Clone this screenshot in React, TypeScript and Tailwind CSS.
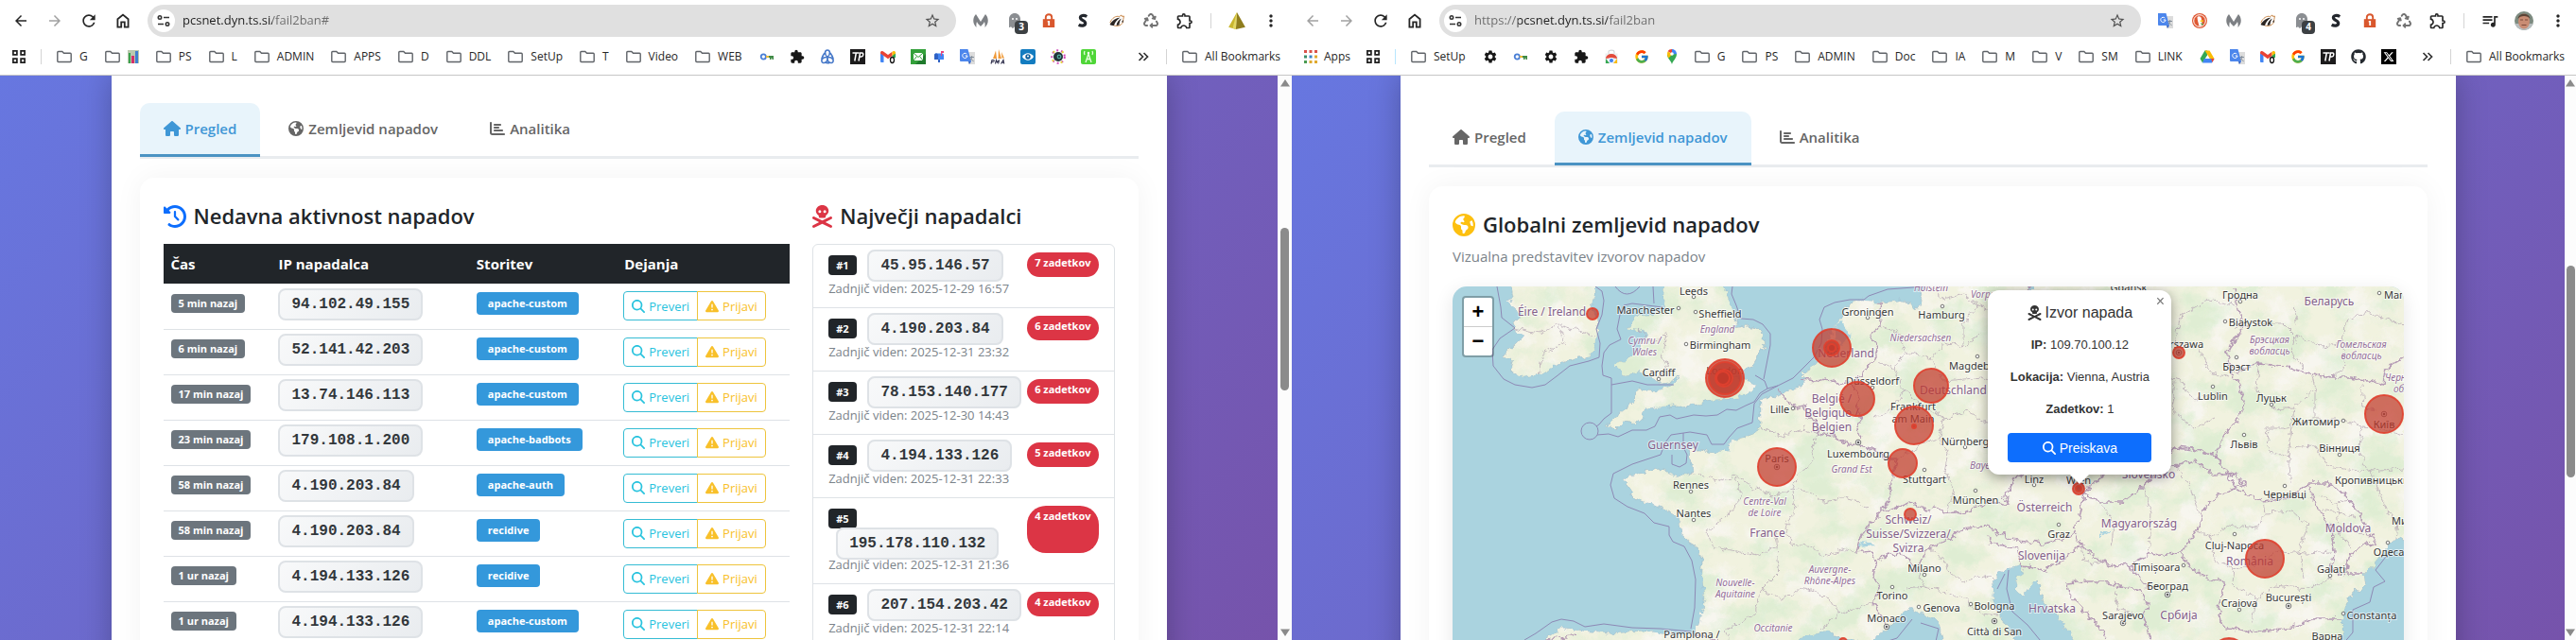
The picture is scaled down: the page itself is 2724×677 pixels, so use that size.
import type { ReactNode } from "react";
import {
  FaChartBar,
  FaClockRotateLeft,
  FaEarthAmericas,
  FaGhost,
  FaGithub,
  FaHouse,
  FaMagnifyingGlass,
  FaRecycle,
  FaSkullCrossbones,
  FaTriangleExclamation,
  FaXTwitter,
} from "react-icons/fa6";
import { FcGoogle } from "react-icons/fc";
import {
  MdArrowBack,
  MdArrowForward,
  MdExtension,
  MdMoreVert,
  MdOutlineExtension,
  MdQueueMusic,
  MdRefresh,
  MdSettings,
  MdStarBorder,
} from "react-icons/md";

/* ---------- browser icons ---------- */

const HomeIcon = () => (
  <svg viewBox="0 0 20 20" className="size-5" fill="none" stroke="currentColor" strokeWidth="1.8">
    <path d="M4.4 16.6V8.2L10 3.6l5.6 4.6v8.4h-3.8v-5.2H8.2v5.2z" />
  </svg>
);

const TuneIcon = () => (
  <svg viewBox="0 0 16 16" className="size-4" fill="none" stroke="#333" strokeWidth="1.6">
    <circle cx="4" cy="4.5" r="1.7" />
    <path d="M8 4.5h6M2 11.5h6" />
    <circle cx="12" cy="11.5" r="1.7" />
  </svg>
);

const FolderIcon = () => (
  <svg viewBox="0 0 16 16" className="size-4 shrink-0" fill="none" stroke="#5f6368" strokeWidth="1.4">
    <path d="M.8 3.4c0-.6.4-.9.9-.9h4.1l1.7 1.8h6.8c.5 0 .9.4.9.9v7.4c0 .5-.4.9-.9.9H1.700c-.5 0-.9-.4-.9-.9z" />
  </svg>
);

const GridIcon = () => (
  <svg viewBox="0 0 16 16" className="size-4" fill="none" stroke="#1f1f1f" strokeWidth="1.7">
    <path d="M1.9 1.9h4v4h-4zM10.1 1.9h4v4h-4zM1.9 10.1h4v4h-4zM10.1 10.1h4v4h-4z" />
  </svg>
);

const AppsIcon = () => (
  <svg viewBox="0 0 16 16" className="size-4">
    <path fill="#d9534a" d="M1 1h3v3H1zM6.500 1h3v3h-3zM12 1h3v3h-3z" />
    <path fill="#3b8f6a" d="M1 6.500h3v3H1z" />
    <path fill="#3b82c4" d="M6.500 6.500h3v3h-3z" />
    <path fill="#e0a92e" d="M12 6.500h3v3h-3zM6.500 12h3v3h-3zM12 12h3v3h-3z" />
    <path fill="#4a9a52" d="M1 12h3v3H1z" />
  </svg>
);

const KeyIcon = () => (
  <svg viewBox="0 0 16 16" className="size-4">
    <circle cx="4.300" cy="8" r="2.600" fill="none" stroke="#4a7fd6" strokeWidth="1.800" />
    <path d="M7 7h3v2H7z" fill="#e8b93a" />
    <path d="M10 7h5v4h-1.500V9.500h-1V11H11V9h-1z" fill="#3f8a45" />
  </svg>
);

const KnotIcon = () => (
  <svg viewBox="0 0 16 16" className="size-4" fill="none" stroke="#4678c8" strokeWidth="1.600">
    <path d="M8 8.500C4 5 5.500 1 8 1s4 4 0 7.500zM8 8.500c1 5-3 6.500-5 5.700s-2-6.200 5-5.700zM8 8.500c-1 5 3 6.500 5 5.700s2-6.200-5-5.700z" />
    <path d="M5 4C3.500 6 2.500 8 1.800 10.500M11 4c1.500 2 2.500 4 3.200 6.500M5.500 14c2 1 3.500 1 5 0" />
  </svg>
);

const TpIcon = () => (
  <svg viewBox="0 0 16 16" className="size-4">
    <path fill="#1c1b1c" d="M0 0h16v16H0z" />
    <path d="M2.500 4h7M6.300 4L4.800 12.500M9 12.500L10.500 4h2.200c1.700 0 1.500 4-1 4H10" fill="none" stroke="#fff" strokeWidth="1.500" />
  </svg>
);

const GmailIcon = () => (
  <svg viewBox="0 0 16 16" className="size-4">
    <path fill="#4285f4" d="M0 4l3.500 2.500V14H1a1 1 0 01-1-1z" />
    <path fill="#34a853" d="M12.500 6.500L16 4v5h-3.500z" />
    <path fill="#ea4335" d="M0 4c0-2 2-2.500 3.500-1.300L8 6l4.500-3.300V7L8 10.300 0 4.500z" />
    <path fill="#fbbc04" d="M12.500 2.700C14 1.500 16 2 16 4v.5L12.500 7z" />
    <ellipse cx="12.500" cy="11.500" rx="2" ry="3" fill="#fff" stroke="#111" strokeWidth="1.300" />
  </svg>
);

const MailIcon = () => (
  <svg viewBox="0 0 16 16" className="size-4">
    <path fill="#33a03a" d="M0 0h16v16H0z" />
    <path fill="#1f7a2c" d="M16 5v11H5z" />
    <path fill="#fff" d="M3 4h10v8H3z" />
    <path d="M3 4l5 4.500L13 4M3 12l3.500-4.500M13 12L9.500 7.500" fill="none" stroke="#33a03a" strokeWidth="1" />
  </svg>
);

const MailboxIcon = () => (
  <svg viewBox="0 0 12 16" className="h-4 w-3">
    <path fill="#4285f4" d="M1 6.500C1 5 2 4.500 3 4.500h6c1 0 2 .5 2 2V11H1z" />
    <path fill="#2f62c4" d="M1 6.500C1 5 2 4.500 3 4.500s2 .5 2 2V11H1zM5 11h2v3H5z" />
    <path fill="#e8467c" d="M8 2h3v2H9v3H8z" />
  </svg>
);

const TranslateIcon = () => (
  <svg viewBox="0 0 16 16" className="size-4">
    <path fill="#dcdcdc" d="M7 3h9v13H9z" />
    <path fill="#4c86ec" d="M0 0h8.500l3.500 13H1a1 1 0 01-1-1z" />
    <path d="M7.300 5.100A2.600 2.600 0 108 7H5.700" fill="none" stroke="#fff" strokeWidth="1" />
    <path d="M10.500 8.500h4.500M12.700 7v1.500c-.3 1.800-1.200 3-2 3.600M11.300 9.500c.8 1.600 2 2.600 3.300 3.200" fill="none" stroke="#7b8794" strokeWidth=".9" />
    <path fill="#3164c8" d="M9 13h3l-2 3z" />
  </svg>
);

const SailIcon = () => (
  <svg viewBox="0 0 16 16" className="size-4">
    <path fill="#f09a38" d="M6 1.500L3 10h4zM9 0l-.5 10H12zM12 3l.5 6.500H15z" />
    <path d="M1 15.500l1-4h1.500c1.200 0 .8 2-.5 2H2M5.500 15.500l1-4 1 2.500 2-2.500-.8 4M11.500 15.500l2.500-4 .8 4M12.500 14.200h2" fill="none" stroke="#2d2d4a" strokeWidth="1.100" />
  </svg>
);

const EyeIcon = () => (
  <svg viewBox="0 0 16 16" className="size-4">
    <rect width="16" height="16" rx="2" fill="#137cc0" />
    <path d="M2 8c3-5 9-5 12 0-3 5-9 5-12 0z" fill="#fff" />
    <circle cx="8" cy="8" r="2.700" fill="#0d5f9c" />
    <circle cx="8" cy="7.500" r="1" fill="#fff" />
  </svg>
);

const CameraIcon = () => (
  <svg viewBox="0 0 16 16" className="size-4">
    <circle cx="8" cy="8" r="6.800" fill="none" stroke="#d148b8" strokeWidth="2" strokeDasharray="2 3" />
    <circle cx="8" cy="8" r="6.800" fill="none" stroke="#e5d73c" strokeWidth="2" strokeDasharray="2 8" strokeDashoffset="4" />
    <circle cx="8" cy="8" r="5" fill="#25343a" />
    <circle cx="9" cy="8" r="2.400" fill="#4fa89a" />
    <circle cx="9" cy="8" r="1" fill="#102028" />
  </svg>
);

const AntennaIcon = () => (
  <svg viewBox="0 0 16 16" className="size-4">
    <rect width="16" height="16" rx="2" fill="#4fd638" />
    <path d="M5 14l3-9 3 9M6.300 10.500h3.400M4 6a4 4 0 010-4M12 6a4 4 0 000-4" fill="none" stroke="#e9ffe2" strokeWidth="1.300" />
    <circle cx="8" cy="4" r="1.200" fill="#fff" />
  </svg>
);

const StoreIcon = () => (
  <svg viewBox="0 0 16 16" className="size-4">
    <path d="M5 5V3c0-2.500 6-2.500 6 0v2" fill="none" stroke="#d4d8da" strokeWidth="1.200" />
    <path fill="#eceff0" d="M1.500 4.500h13L15 15H1z" />
    <path fill="#e24a3b" d="M2 10a6 5 0 0112 0L8 9z" />
    <path fill="#35a852" d="M2 10l4 5H2z" />
    <path fill="#f9bc15" d="M14 10l-4 5h4z" />
    <circle cx="8" cy="12" r="2.600" fill="#4285f4" stroke="#fff" />
  </svg>
);

const PinIcon = () => (
  <svg viewBox="0 0 16 16" className="size-4">
    <path fill="#34a853" d="M8 16C7 12 3 10 3 5.500L13 5c0 5-4 7-5 11z" />
    <path fill="#4285f4" d="M8 0c3 0 5 2.500 5 5l-5 .5z" />
    <path fill="#ea4335" d="M8 0C6 0 4.500.8 3.700 2.200L8 5z" />
    <path fill="#fbbc04" d="M3.500 2.500C2.500 5 3.300 7.500 4.500 9.500L8.500 5z" />
    <circle cx="8" cy="5" r="1.800" fill="#fff" />
  </svg>
);

const DriveIcon = () => (
  <svg viewBox="0 0 16 16" className="size-4">
    <path fill="#34a853" d="M5.500 1.500h2.700L8 6.500l-5 8L.5 10z" />
    <path fill="#fbbc04" d="M5.500 1.500h5l5 8.500h-4.700z" />
    <path fill="#4285f4" d="M5 10h10.500L13 14.500H3z" />
    <path fill="#ea4335" d="M12 10h3.500L13.500 14z" />
  </svg>
);

const ExtM = () => (
  <svg viewBox="0 0 16 16" className="size-4" fill="#7d8084">
    <path d="M3.500 15C-1 11-.5 4.500 3 1L8 9l5-8c3.500 3.500 4 10-.5 14 .2-2.500.2-4-.5-6C11 11 9.500 12.500 8 14 6.500 12.500 5 11 4 9c-.7 2-.7 3.500-.5 6z" />
  </svg>
);

const LockIcon = () => (
  <svg viewBox="0 0 16 16" className="size-4">
    <path d="M4.800 7V4.200c0-4 6.400-4 6.400 0V7" fill="none" stroke="#d9572d" strokeWidth="1.900" />
    <path fill="#d9572d" d="M1.800 6.200h12.400V15H1.800z" />
    <path fill="#fff" d="M6.800 8h2.300v5H7.300V9.600h-.6z" />
  </svg>
);

const SIcon = () => (
  <svg viewBox="0 0 16 16" className="size-4" fill="none" stroke="#23272d" strokeWidth="3.200">
    <path d="M12.300 3.500C9 1.500 5.500 2.500 5.400 4.600c0 3.400 5.700 2.800 5.300 6.200-.3 2.700-4.500 3-7 1.400" />
  </svg>
);

const BadgerIcon = () => (
  <svg viewBox="0 0 16 16" className="size-4">
    <path d="M1 9.500C3 5 7 2.500 10.500 3.500L13 2l.5 1.500L15.500 3l-.7 3.500c.2 3-1.300 5.500-4.300 6.500-3.500 1-7 .5-9.500-3.500z" fill="#fff" stroke="#c98a4e" strokeWidth="1" />
    <path fill="#2b2522" d="M.5 12C3 7.500 7 5 11.500 4.500 8 7 6 9.500 5 13c-2 0-3.500-.3-4.500-1zM7.500 13c.5-3.500 2.500-6 5.500-7.500-1.500 2-2.500 4.500-2.500 7zM13 9l2-2-.5 3z" />
  </svg>
);

const DuckIcon = () => (
  <svg viewBox="0 0 16 16" className="size-4">
    <circle cx="8" cy="8" r="8" fill="#de5833" />
    <circle cx="8" cy="8" r="6.300" fill="none" stroke="#fff" strokeWidth="1" />
    <path fill="#fff" d="M5.500 4C7 2.500 10 3.500 10 6.500l.8 6.500-3.300.8C7 11 5.500 7 5.500 4z" />
    <path fill="#fdd20a" d="M8.500 7.500h3.500v1.300H8.500z" />
    <path fill="#4b9b3b" d="M8.500 10.500l3.500.5-1 2z" />
  </svg>
);

const PyramidIcon = () => (
  <svg viewBox="0 0 18 18" className="size-5">
    <path fill="#c9b62f" d="M9 1L1 15l7 2z" />
    <path fill="#8f7d1d" d="M9 1l8 14-9 2z" />
    <path fill="#e3d765" d="M9 1L5 15.800l3 1.200z" />
  </svg>
);

const Avatar = () => (
  <svg viewBox="0 0 20 20" className="size-5">
    <clipPath id="avatar">
      <circle cx="10" cy="10" r="10" />
    </clipPath>
    <g clipPath="url(#avatar)">
      <path fill="#7d8b80" d="M0 0h20v20H0z" />
      <path fill="#b9bec0" d="M0 13h20v7H0z" />
      <ellipse cx="10" cy="10.500" rx="6" ry="8" fill="#c98c73" />
      <path fill="#5b4436" d="M3.500 8C4 1 16 1 16.500 8 14 4 6 4 3.500 8z" />
      <path d="M6 9h3M11 9h3M7.500 14.500h5" stroke="#7c4a3b" strokeWidth="1.200" />
    </g>
  </svg>
);

/* ---------- browser chrome ---------- */

type Bookmark = { label?: string; icon?: ReactNode; name?: string; after?: ReactNode };

const chart = (
  <svg viewBox="0 0 12 14" className="h-4 w-3">
    <path fill="#b9c9ae" d="M0 0h12v14H0z" />
    <path fill="#3aa04c" d="M1 3h2v11H1z" />
    <path fill="#d42f6a" d="M4 6h3v8H4z" />
    <path fill="#3f7fd0" d="M8 1h3v13H8z" />
  </svg>
);

const leftBookmarks: Bookmark[] = [
  { label: "G" },
  { name: "Charts", after: chart },
  { label: "PS" },
  { label: "L" },
  { label: "ADMIN" },
  { label: "APPS" },
  { label: "D" },
  { label: "DDL" },
  { label: "SetUp" },
  { label: "T" },
  { label: "Video" },
  { label: "WEB" },
  { name: "Passwords", icon: <KeyIcon /> },
  { name: "Extensions", icon: <MdExtension className="size-4 text-neutral-900" /> },
  { name: "Knot", icon: <KnotIcon /> },
  { name: "TP", icon: <TpIcon /> },
  { name: "Gmail", icon: <GmailIcon /> },
  { name: "Mail", icon: <MailIcon />, after: <MailboxIcon /> },
  { name: "Translate", icon: <TranslateIcon /> },
  { name: "phpMyAdmin", icon: <SailIcon /> },
  { name: "Viewer", icon: <EyeIcon /> },
  { name: "Camera", icon: <CameraIcon /> },
  { name: "Antenna", icon: <AntennaIcon /> },
];

const rightBookmarks: Bookmark[] = [
  { label: "SetUp" },
  { name: "Settings", icon: <MdSettings className="size-4 text-neutral-900" /> },
  { name: "Passwords", icon: <KeyIcon /> },
  { name: "Site settings", icon: <MdSettings className="size-4 text-neutral-900" /> },
  { name: "Extensions", icon: <MdExtension className="size-4 text-neutral-900" /> },
  { name: "Web Store", icon: <StoreIcon /> },
  { name: "Google", icon: <FcGoogle className="size-4" /> },
  { name: "Maps", icon: <PinIcon /> },
  { label: "G" },
  { label: "PS" },
  { label: "ADMIN" },
  { label: "Doc" },
  { label: "IA" },
  { label: "M" },
  { label: "V" },
  { label: "SM" },
  { label: "LINK" },
  { name: "Drive", icon: <DriveIcon /> },
  { name: "Translate", icon: <TranslateIcon /> },
  { name: "Gmail", icon: <GmailIcon /> },
  { name: "Search", icon: <FcGoogle className="size-4" /> },
  { name: "TP", icon: <TpIcon /> },
  { name: "GitHub", icon: <FaGithub className="size-4 text-[#24292f]" /> },
  {
    name: "X",
    icon: (
      <span className="flex size-4 items-center justify-center bg-black text-white">
        <FaXTwitter className="size-3" />
      </span>
    ),
  },
];

function BookmarkItem({ item }: { item: Bookmark }) {
  return (
    <a
      href="#"
      aria-label={item.name}
      className={item.icon ? "flex items-center gap-2 px-2" : "flex items-center gap-2 pr-2.5 pl-2"}
    >
      {item.icon ?? <FolderIcon />}
      {item.label && <span>{item.label}</span>}
      {item.after}
    </a>
  );
}

function ToolButton({ label, children, muted }: { label: string; children: ReactNode; muted?: boolean }) {
  return (
    <button
      aria-label={label}
      className={
        muted
          ? "flex size-9 shrink-0 items-center justify-center text-neutral-400"
          : "flex size-9 shrink-0 items-center justify-center text-neutral-800"
      }
    >
      {children}
    </button>
  );
}

function Ghost({ count }: { count: number }) {
  return (
    <span className="relative">
      <FaGhost className="size-4 text-[#8b8e92]" />
      <span className="absolute top-2 left-2 flex h-3.5 w-3.5 items-center justify-center rounded bg-[#3c4043] text-[10px] font-bold text-white">
        {count}
      </span>
    </span>
  );
}

type BrowserProps = {
  url: string;
  urlClass: string;
  canGoBack?: boolean;
  extensions: ReactNode;
  start: ReactNode;
  bookmarks: Bookmark[];
  barClass: string;
  thumbClass: string;
  children: ReactNode;
};

function Browser(props: BrowserProps) {
  return (
    <section className="flex h-full min-w-0 flex-col overflow-hidden bg-white">
      <header className="shrink-0 border-b border-[#c6c6c6] text-xs text-neutral-800">
        <div className="flex h-11 items-center pl-1">
          <ToolButton label="Back" muted={!props.canGoBack}>
            <MdArrowBack className="size-[18px]" />
          </ToolButton>
          <ToolButton label="Forward" muted>
            <MdArrowForward className="size-[18px]" />
          </ToolButton>
          <ToolButton label="Reload">
            <MdRefresh className="size-5" />
          </ToolButton>
          <ToolButton label="Home">
            <HomeIcon />
          </ToolButton>
          <div className="mr-2 ml-2 flex h-[34px] min-w-0 flex-1 items-center rounded-full bg-[#e0e0e0] pr-4 pl-[5px]">
            <button aria-label="Site information" className="flex size-6 items-center justify-center rounded-full bg-white">
              <TuneIcon />
            </button>
            <input
              aria-label="Address"
              defaultValue={props.url}
              className={`ml-2 min-w-0 flex-1 bg-clip-text text-[13px] text-transparent outline-none ${props.urlClass}`}
            />
            <button aria-label="Bookmark this page">
              <MdStarBorder className="size-[18px] text-neutral-600" />
            </button>
          </div>
          {props.extensions}
        </div>
        <nav className="flex h-[35px] items-center pb-1 whitespace-nowrap">
          {props.start}
          {props.bookmarks.map((item, i) => (
            <BookmarkItem key={i} item={item} />
          ))}
          <button aria-label="More bookmarks" className="ml-auto pr-[18px]">
            <svg viewBox="0 0 12 12" className="size-3" fill="none" stroke="#333" strokeWidth="1.700">
              <path d="M1.500 2l4 4-4 4M6.500 2l4 4-4 4" />
            </svg>
          </button>
          <span className="h-4 w-px bg-neutral-300" />
          <a href="#" className="flex items-center gap-2 pr-3 pl-4">
            <FolderIcon />
            All Bookmarks
          </a>
        </nav>
      </header>
      <div className="flex min-h-0 flex-1">
        <div className="min-w-0 flex-1 overflow-hidden bg-[linear-gradient(135deg,#6777e0,#7653ab)]">
          <main className="mx-auto min-h-full max-w-[1116px] bg-white px-[30px] shadow-[0_0_30px_rgba(0,0,0,0.25)]">
            {props.children}
          </main>
        </div>
        <div className={props.barClass}>
          <svg viewBox="0 0 10 8" className="h-2 w-2.5" fill="#8a8a8a">
            <path d="M5 0l5 7.500H0z" />
          </svg>
          <span className={props.thumbClass} />
          <svg viewBox="0 0 10 8" className="h-2 w-2.5" fill="#8a8a8a">
            <path d="M5 8L0 .5h10z" />
          </svg>
        </div>
      </div>
    </section>
  );
}

/* ---------- dashboard ---------- */

function Tabs({ active }: { active: number }) {
  const tabs = [
    { label: "Pregled", icon: <FaHouse className="h-4 w-[18px]" /> },
    { label: "Zemljevid napadov", icon: <FaEarthAmericas className="size-4" /> },
    { label: "Analitika", icon: <FaChartBar className="size-4" /> },
  ];
  return (
    <div role="tablist" className="flex gap-[5px] border-b-[3px] border-[#e9ecef]">
      {tabs.map((tab, i) => (
        <button
          key={tab.label}
          role="tab"
          aria-selected={i === active}
          className={
            i === active
              ? "-mb-px flex items-center gap-[5px] rounded-t-[10px] border-b-[3px] border-[#4b93c3] bg-[#e8f4fb] px-[25px] py-[15px] font-semibold text-[#3f97d6]"
              : "-mb-px flex items-center gap-[5px] border-b-[3px] border-transparent px-[25px] py-[15px] font-semibold text-[#666]"
          }
        >
          {tab.icon}
          {tab.label}
        </button>
      ))}
    </div>
  );
}

const attacks = [
  ["5 min nazaj", "94.102.49.155", "apache-custom"],
  ["6 min nazaj", "52.141.42.203", "apache-custom"],
  ["17 min nazaj", "13.74.146.113", "apache-custom"],
  ["23 min nazaj", "179.108.1.200", "apache-badbots"],
  ["58 min nazaj", "4.190.203.84", "apache-auth"],
  ["58 min nazaj", "4.190.203.84", "recidive"],
  ["1 ur nazaj", "4.194.133.126", "recidive"],
  ["1 ur nazaj", "4.194.133.126", "apache-custom"],
];

const attackers = [
  ["45.95.146.57", "2025-12-29 16:57", "7"],
  ["4.190.203.84", "2025-12-31 23:32", "6"],
  ["78.153.140.177", "2025-12-30 14:43", "6"],
  ["4.194.133.126", "2025-12-31 22:33", "5"],
  ["195.178.110.132", "2025-12-31 21:36", "4"],
  ["207.154.203.42", "2025-12-31 22:14", "4"],
];

const chip =
  "rounded-lg border-2 border-[#dee2e6] bg-[linear-gradient(135deg,#f8f9fa,#e9ecef)] px-3 font-['Liberation_Mono',monospace] text-base leading-5 font-bold text-[#32373b]";

function AttackTable() {
  return (
    <table className="w-full table-fixed text-left">
      <thead className="bg-[#212529] text-white">
        <tr className="h-[42px]">
          <th className="w-[17.2%] px-2 font-bold">Čas</th>
          <th className="w-[31.6%] px-2 font-bold">IP napadalca</th>
          <th className="w-[23.6%] px-2 font-bold">Storitev</th>
          <th className="px-2 font-bold">Dejanja</th>
        </tr>
      </thead>
      <tbody>
        {attacks.map(([time, ip, service], i) => (
          <tr key={i} className="h-12 border-b border-[#dee2e6]">
            <td className="px-2 pb-1.5">
              <span className="block w-fit rounded bg-[#6c757d] px-2 text-[11px] leading-5 font-bold whitespace-nowrap text-white">
                {time}
              </span>
            </td>
            <td className="px-2 pb-1">
              <span className={`block w-fit py-[5px] ${chip}`}>{ip}</span>
            </td>
            <td className="px-2 pb-1.5">
              <span className="block w-fit rounded bg-[#3498db] px-3 text-[11px] leading-6 font-bold text-white">
                {service}
              </span>
            </td>
            <td className="px-[7px]">
              <div className="flex text-[13px]">
                <button className="flex h-[31px] items-center gap-1 rounded-l border border-[#35bcd4] px-2 text-[#29c3de]">
                  <FaMagnifyingGlass className="size-3.5" />
                  Preveri
                </button>
                <button className="-ml-px flex h-[31px] items-center gap-1 rounded-r border border-[#eec43c] px-2 text-[#f8c02a]">
                  <FaTriangleExclamation className="size-3.5" />
                  Prijavi
                </button>
              </div>
            </td>
          </tr>
        ))}
      </tbody>
    </table>
  );
}

function Overview() {
  return (
    <div className="grid grid-cols-3 gap-6">
      <section className="col-span-2">
        <h2 className="mb-[15px] flex items-center gap-2 text-[22px] leading-[29px] font-semibold">
          <FaClockRotateLeft className="size-6 text-[#0d6efd]" />
          Nedavna aktivnost napadov
        </h2>
        <AttackTable />
      </section>
      <section>
        <h2 className="mb-[15px] flex items-center gap-2 text-[22px] leading-[29px] font-semibold">
          <FaSkullCrossbones className="h-6 w-[21px] text-[#dc3545]" />
          Največji napadalci
        </h2>
        <ul className="divide-y divide-[#dee2e6] rounded-md border border-[#dee2e6]">
          {attackers.map(([ip, seen, hits], i) => (
            <li key={ip} className="px-4 py-2">
              <div className="flex justify-between">
                <div className="min-w-0">
                  <span className="rounded bg-[#212529] px-2 py-[3px] text-[11px] font-bold text-white">#{i + 1}</span>{" "}
                  <span className={`ml-2 inline py-[6px] whitespace-nowrap ${chip}`}>{ip}</span>
                </div>
                <span className="shrink-0 rounded-[20px] bg-[#dc3545] px-2 pb-1 text-[11px] leading-[22px] font-bold text-white">
                  {hits} zadetkov
                </span>
              </div>
              <p className="text-[13px] leading-6 text-[#7b838a]">Zadnjič viden: {seen}</p>
            </li>
          ))}
        </ul>
      </section>
    </div>
  );
}

/* ---------- map ---------- */

type Label = [string, number, number, ("start" | "end")?];

const cities: Label[] = [
  ["Leeds", 255, 4],
  ["Manchester", 204, 24],
  ["Sheffield", 283, 28],
  ["Birmingham", 283, 61],
  ["Cardiff", 218, 90],
  ["London", 288, 88],
  ["Groningen", 439, 26],
  ["Düsseldorf", 444, 99],
  ["Lille", 346, 129],
  ["Luxembourg", 429, 176],
  ["Paris", 343, 181],
  ["Rennes", 252, 209],
  ["Nantes", 255, 239],
  ["Pamplona /", 253, 367],
  ["Monaco", 459, 350],
  ["Torino", 465, 326],
  ["Hamburg", 517, 29],
  ["Magdeburg", 525, 83, "start"],
  ["Frankfurt", 487, 126],
  ["am Main", 487, 139],
  ["Nürnberg", 542, 163],
  ["Stuttgart", 499, 203],
  ["München", 553, 225],
  ["Milano", 499, 297],
  ["Genova", 517, 339],
  ["Bologna", 573, 337],
  ["Città di San", 573, 364],
  ["Linz", 615, 203],
  ["Wien", 662, 204],
  ["Graz", 641, 261],
  ["Timișoara", 744, 296],
  ["Београд", 756, 316],
  ["Sarajevo", 709, 347],
  ["Gdańsk", 715, 0],
  ["Warszawa", 768, 60],
  ["Lublin", 804, 115],
  ["Гродна", 833, 8],
  ["Магілёў", 985, 8, "start"],
  ["Białystok", 844, 37],
  ["Брэст", 829, 84],
  ["Луцьк", 866, 117],
  ["Житомир", 913, 142],
  ["Київ", 985, 145],
  ["Львів", 837, 166],
  ["Вінниця", 938, 170],
  ["Кропивницький", 933, 204, "start"],
  ["Чернівці", 880, 219],
  ["Миколаїв", 993, 247, "start"],
  ["Одеса", 990, 280],
  ["Cluj-Napoca", 827, 273],
  ["Galați", 929, 298],
  ["București", 884, 328],
  ["Craiova", 832, 334],
  ["Constanța", 972, 347],
  ["Варна", 925, 369],
];

const countries: Label[] = [
  ["Éire / Ireland", 105, 26],
  ["Guernsey", 233, 167],
  ["Nederland", 416, 70],
  ["België /", 401, 118],
  ["Belgique /", 401, 133],
  ["Belgien", 401, 148],
  ["France", 333, 260],
  ["Deutschland", 494, 109, "start"],
  ["Schweiz/", 482, 246],
  ["Suisse/Svizzera/", 482, 261],
  ["Svizra", 482, 276],
  ["Slovensko", 736, 198],
  ["Österreich", 626, 233],
  ["Magyarország", 726, 250],
  ["Slovenija", 623, 284],
  ["Hrvatska", 634, 340],
  ["Србија", 768, 347],
  ["Беларусь", 927, 15],
  ["Moldova", 947, 255],
  ["România", 843, 290],
];

const regions: Label[] = [
  ["England", 280, 45],
  ["Cymru /", 203, 57],
  ["Wales", 203, 69],
  ["Niedersachsen", 495, 54],
  ["Grand Est", 422, 193],
  ["Centre-Val", 330, 227],
  ["de Loire", 330, 239],
  ["Auvergne-", 399, 299],
  ["Rhône-Alpes", 399, 311],
  ["Nouvelle-", 299, 313],
  ["Aquitaine", 299, 325],
  ["Occitanie", 339, 361],
  ["Holstein", 506, 1],
  ["Vorpommern", 548, 8, "start"],
  ["Bayern", 547, 189, "start"],
  ["Брэсцкая", 864, 56],
  ["вобласць", 864, 68],
  ["Гомельская", 961, 61],
  ["вобласць", 961, 73],
  ["Чернігівська", 986, 96, "start"],
  ["область", 995, 108, "start"],
];

const dots = [
  [255, 11], [239, 23], [257, 27], [247, 61], [218, 98], [439, 33], [444, 107], [360, 129], [252, 217], [255, 247],
  [465, 318], [518, 21], [555, 74], [542, 170], [499, 194], [553, 216], [499, 305], [493, 339], [548, 336],
  [615, 210], [641, 252], [773, 295], [804, 106], [833, 16], [980, 7], [817, 37], [829, 75], [866, 125], [942, 142],
  [837, 157], [938, 178], [880, 211], [989, 271], [827, 262], [928, 306], [832, 342], [942, 346],
];

const capitals = [
  [429, 165], [343, 191], [459, 360], [573, 354], [756, 326], [709, 356], [985, 135], [884, 338], [768, 70],
];

const hits = [
  [148, 29, 6], [288, 97, 20], [288, 97, 17], [287, 97, 9], [286, 97, 7], [401, 65, 20], [401, 65, 8], [401, 65, 4],
  [428, 119, 18], [506, 105, 18], [488, 147, 20], [488, 148, 2], [476, 187, 15], [484, 241, 6], [343, 191, 20],
  [768, 70, 6], [662, 214, 6], [662, 214, 3], [985, 135, 20], [859, 288, 20], [821, 390, 18], [413, 376, 4],
];

const land = [
  // Ireland
  "M61 -6L64 12 57 17 74 30 64 39 67 47 74 54 64 64 54 72 64 79 61 89 74 97 91 94 107 84 121 79 144 74 151 64 154 47 151 30 146 20 151 10 151 -6z",
  // Great Britain
  "M224 -6L223 12 226 25 211 30 202 32 194 30 186 44 197 45 206 50 194 70 171 84 184 95 197 90 211 97 221 102 231 100 241 94 234 104 217 110 197 109 191 124 177 134 161 147 172 151 181 142 197 144 204 130 224 127 241 127 257 125 271 120 291 119 311 114 322 104 307 99 297 97 304 94 317 84 329 64 327 47 311 42 297 44 301 30 292 15 286 -6z",
  // Continent
  "M500 -6L496 12 490 28 484 16 474 15 454 17 431 14 414 22 412 34 406 42 401 47 392 70 381 84 369 92 374 97 369 105 357 110 344 115 326 119 326 150 311 159 294 164 291 174 274 175 261 172 251 172 254 197 247 200 231 199 217 192 197 197 181 204 191 217 187 222 207 230 227 237 237 244 242 254 244 267 261 277 264 290 264 304 266 330 261 360 254 367 231 367 204 365 164 367 137 364 114 362 101 370 96 380 362 380 372 369 397 365 412 374 441 376 457 364 474 349 484 340 501 349 514 354 521 380 600 380 581 354 571 334 572 320 571 309 584 300 601 295 604 302 597 307 596 320 604 327 611 314 619 312 624 334 641 350 661 380 941 380 941 354 944 340 951 324 966 317 964 304 974 294 989 277 994 269 1012 267 1012 -6 622 -6 612 3 602 -6z",
].join(" ");

const borders = [
  // Benelux and the Rhine
  "M345 108L350 118 362 128 371 126 375 138 386 143 387 155 404 158 418 167 427 168 432 160 428 150 433 140 427 130 432 118 424 106 433 92 446 78 450 62 441 52 453 42 452 17",
  "M369 98L385 100 395 98 405 103 420 100 424 106",
  "M432 168L446 172 462 183 470 183 465 200 462 225 452 240 440 252 430 268 427 282 444 280 448 290 445 305 452 318 445 332 452 348 459 358",
  // Alps
  "M452 240L468 235 484 228 502 237 510 232 524 240 540 238 560 230 572 228 588 232 584 222 596 202 610 196 640 196 662 178 678 182 690 196",
  "M448 290L462 282 478 285 490 300 504 276 516 272 530 264 540 256 566 252 572 258 590 268 606 270 626 272 648 266 658 258 664 240 668 218 678 208 690 196",
  "M566 264L570 272 596 276 602 296 626 300 646 290 664 272 658 260",
  // Pannonia and the Balkans
  "M664 272L680 288 700 296 716 294 736 284 770 282 786 260 796 232 810 220 838 210 828 198 806 200 784 184 764 190 748 196 730 212 708 228 684 228 668 218",
  "M650 314L672 312 690 312 710 318 728 322 736 336 730 350 738 374",
  "M650 314L652 326 668 344 684 360 690 374",
  "M716 294L726 308 736 320 M770 282L780 296 800 310 816 312 810 340 814 360 850 366 890 360 912 352 941 352",
  "M730 212L764 170 784 172 808 180 812 164 830 140 838 124 832 104 824 92 M808 180L830 216 858 228 888 222 904 208 926 208 946 222 958 240 968 260 976 272 962 274 948 286 944 304 964 304",
  "M904 208L912 230 928 252 932 280 928 300 944 306",
  "M824 92L852 82 880 84 908 92 930 96 950 96 968 100 984 104 986 88 1010 74",
  "M824 92L818 70 836 44 826 4",
  "M664 60L676 40 700 36 M606 196L620 170 600 150 588 120 604 100 600 60 612 20 610 -4",
  "M254 367L280 374 M96 374L130 368",
].join(" ");

const provinces = [
  "M197 45L210 60 226 50 222 70 228 88 216 96 M66 44L90 50 110 40 150 52 M91 94L95 70 120 60 110 40",
  "M254 197L280 206 300 200 320 214 340 222 360 214 380 218 392 228 412 224 430 228 440 236",
  "M326 150L350 158 372 150 387 155 380 172 384 184 366 200 360 216 362 236 352 256 358 272 380 276 392 286 412 278 426 282",
  "M300 200L306 224 292 240 268 260 276 276 300 280 322 284 344 274 346 300 326 320 320 346 288 364",
  "M344 274L340 260 M326 320L350 330 372 318 398 330 410 346 430 340 446 332 M288 364L296 380 M410 346L390 362",
  "M453 42L470 48 480 70 466 86 450 80 M480 70L506 76 520 60 540 64 560 50 M466 86L476 110 466 130 446 140 M506 76L520 100 560 96 588 110",
  "M470 183L490 170 514 160 524 176 520 196 530 214 524 240 M514 160L520 140 544 132 566 144 590 140 M476 110L496 124 520 140",
  "M500 -4L520 14 540 8 556 20 540 40 540 64 M556 20L580 30 600 24",
  "M504 276L520 290 526 304 540 312 562 306 571 309 M490 300L500 318 520 322 540 330 560 346 576 348 M478 320L500 318",
  "M700 36L724 44 740 70 764 60 790 66 800 90 820 96 M740 70L752 96 770 100 784 120 812 112 M764 100L760 130 784 150 806 140 M764 60L770 30 800 14 826 20",
  "M826 44L850 40 880 40 892 52 888 70 900 86 M892 52L920 64 940 58 946 34 968 28 1006 40 M940 58L944 84 930 96 M888 20L893 40",
  "M852 82L850 110 870 130 890 128 912 108 908 92 M912 108L912 140 880 150 860 150 M890 128L884 170 886 206 M912 140L940 140 962 148 980 150 1006 158 M884 170L912 168 926 190 958 196 1006 192 M860 150L864 176 886 180",
  "M962 104L964 128 976 130 M962 148L958 174 970 196 978 214 988 236 1000 250 998 268",
  "M786 260L804 264 820 252 850 256 860 240 888 238 904 252 M860 240L858 228 M804 264L806 290 826 298 850 294 876 280 904 282 928 280 M826 298L824 314 850 330 846 356 M850 330L870 316 904 320 930 308 M904 252L896 280 900 310",
  "M916 220L934 230 946 226 M920 236L940 240 956 244 M936 230L938 262 950 276 M928 262L950 258 964 262",
  "M700 318L704 340 720 346 M664 272L668 290 700 296 M684 228L700 250 696 276 M730 212L740 240 736 284 M764 190L780 210 790 240",
].join(" ");

const seaBorders = [
  "M47 0L51 22 52 33 66 44 50 55 42 67 43 84 54 98 66 104 84 107 98 104 110 95 124 84 144 79 155 75 156 60 152 45 158 30 160 15 158 5 151 0",
  "M212 0L213 18 M172 0Q184 16 198 0",
  "M222 22L190 18 181 20 177 30 174 45 178 56 166 62 160 70 158 84 159 94 168 97 168 134 160 140 155 146 152 148",
  "M153 157L165 156 175 159 190 152 205 152 214 148 219 138 230 136 237 140 255 136 268 137 280 136 290 130 300 131 310 126 319 122 325 113 333 108 330 100 320 94",
  "M329 98L336 62 336 50 328 40 318 35 305 34 300 20 295 8 296 0",
  "M168 104L190 100 206 104 234 104",
  "M344 105L327 114 319 124 317 144 301 150 292 160 287 167 274 167 269 157 251 154 231 157 225 165 220 178 190 188 170 198 167 210 171 224 185 233 203 240 213 250 229 254 229 263 233 270 245 275 253 290 257 310 256 340 252 362",
  "M232 178L232 188 240 191 247 187 248 178 244 170 244 155",
  "M333 108L344 105 360 97 370 87 382 75 390 60 391 45 388 35 393 22 404 17 420 14 435 14 440 10 460 3 474 2 500 0",
  "M76 374L88 367 105 355 115 352 128 354 140 360 160 357 190 361 220 362 252 365",
  "M588 300L586 320 592 344 608 358 626 380 M584 304L576 320",
  "M445 380L470 372 486 352 M495 356L514 362 510 380",
  "M990 282L976 300 986 312 974 318 970 334 952 342 952 366 940 380",
].join(" ");

function MapLabels({ items, className, size }: { items: Label[]; className: string; size: number }) {
  return (
    <g className={className} fontSize={size} stroke="#fff" strokeOpacity=".6" strokeWidth="2" paintOrder="stroke">
      {items.map(([text, x, y, anchor], i) => (
        <text key={i} x={x} y={y} dominantBaseline="central" textAnchor={anchor ?? "middle"}>
          {text}
        </text>
      ))}
    </g>
  );
}

function EuropeMap() {
  return (
    <svg viewBox="0 0 1006 500" preserveAspectRatio="xMidYMin slice" className="h-full w-full font-['Noto_Sans',sans-serif]">
      <defs>
        <clipPath id="land">
          <path d={land} />
        </clipPath>
        <filter id="rough" x="0" y="0" width="1006" height="500" filterUnits="userSpaceOnUse">
          <feTurbulence type="fractalNoise" baseFrequency=".14" numOctaves="3" seed="4" />
          <feDisplacementMap in="SourceGraphic" scale="9" xChannelSelector="R" yChannelSelector="G" />
        </filter>
        <filter id="forest" x="0" y="0" width="100%" height="100%">
          <feTurbulence type="fractalNoise" baseFrequency=".022 .03" numOctaves="6" seed="11" />
          <feColorMatrix values="0 0 0 0 .68  0 0 0 0 .84  0 0 0 0 .62  0 4 0 0 -1.85" />
        </filter>
        <filter id="fields" x="0" y="0" width="100%" height="100%">
          <feTurbulence type="fractalNoise" baseFrequency=".03" numOctaves="5" seed="31" />
          <feColorMatrix values="0 0 0 0 .95  0 0 0 0 .93  0 0 0 0 .9  4 0 0 0 -1.9" />
        </filter>
      </defs>
      <rect width="1006" height="500" fill="#aad3df" />
      <g filter="url(#rough)">
        <path d={land} fill="#f1f2df" stroke="#9db6c4" strokeWidth=".6" />
        <g clipPath="url(#land)">
          <rect width="1006" height="500" filter="url(#fields)" opacity=".8" />
          <rect width="1006" height="500" filter="url(#forest)" opacity=".7" />
        </g>
        <path d="M404 44L412 38 418 46 422 54 412 62 406 56z" fill="#aad3df" />
        <path d="M683 264L700 256 690 262z M428 276L438 270 446 274" fill="#aad3df" stroke="#aad3df" />
        <path d={provinces} fill="none" stroke="#b9aab6" strokeWidth=".8" />
        <path d={borders} fill="none" stroke="#b59bb5" strokeWidth="1.500" />
      </g>
      <path d={seaBorders} fill="none" stroke="#8d89b5" strokeWidth="1" strokeLinejoin="round" />
      <circle cx="145" cy="153" r="9" fill="none" stroke="#8d89b5" />
      <g fill="#fff" stroke="#555" strokeWidth=".8">
        {dots.map(([x, y], i) => (
          <circle key={i} cx={x} cy={y} r="1.800" />
        ))}
        {capitals.map(([x, y], i) => (
          <g key={i}>
            <circle cx={x} cy={y} r="2.800" />
            <circle cx={x} cy={y} r="1" fill="#333" />
          </g>
        ))}
      </g>
      <MapLabels items={regions} size={10} className="fill-[#946f9a] italic" />
      <MapLabels items={countries} size={12} className="fill-[#84608a]" />
      <MapLabels items={cities} size={11} className="fill-[#383838]" />
      <g fill="#c0392b" fillOpacity=".72" stroke="#e0402f" strokeWidth="2" strokeOpacity=".9">
        {hits.map(([x, y, r], i) => (
          <circle key={i} cx={x} cy={y} r={r} />
        ))}
      </g>
    </svg>
  );
}

function Popup() {
  return (
    <div className="absolute top-1 left-[56.3%] w-[194px] drop-shadow-[0_3px_7px_rgba(0,0,0,0.4)]">
      <div className="rounded-xl bg-white px-[21px] pt-[14px] pb-[13px] text-center font-['Liberation_Sans',sans-serif] text-[13px] leading-[17px] text-[#333]">
        <button aria-label="Close" className="absolute top-0 right-0 flex size-6 items-center justify-center text-base text-[#757575]">
          ×
        </button>
        <h3 className="mb-4 flex items-center justify-center gap-1 text-base leading-[19px]">
          <FaSkullCrossbones className="h-4 w-[15px]" />
          Izvor napada
        </h3>
        <p className="mb-[17px]">
          <b>IP:</b> 109.70.100.12
        </p>
        <p className="mb-[17px]">
          <b>Lokacija:</b> Vienna, Austria
        </p>
        <p className="mb-[17px]">
          <b>Zadetkov:</b> 1
        </p>
        <button className="flex h-[31px] w-full items-center justify-center gap-1 rounded bg-[#0d6efd] text-sm text-white">
          <FaMagnifyingGlass />
          Preiskava
        </button>
      </div>
      <svg viewBox="0 0 20 10" className="mx-auto h-2.5 w-5" fill="#fff">
        <path d="M0 0h20L10 10z" />
      </svg>
    </div>
  );
}

function AttackMap() {
  return (
    <section>
      <h2 className="flex items-center gap-2 text-[22px] leading-[29px] font-semibold">
        <FaEarthAmericas className="size-6 text-[#fdc010]" />
        Globalni zemljevid napadov
      </h2>
      <p className="mt-[7px] mb-5 text-[15px] leading-6 text-[#7b838a]">Vizualna predstavitev izvorov napadov</p>
      <div className="relative h-[500px] overflow-hidden rounded-[15px] shadow-[0_5px_20px_rgba(0,0,0,0.1)]">
        <EuropeMap />
        <div className="absolute top-2.5 left-2.5 flex w-[34px] flex-col divide-y divide-[#ccc] overflow-hidden rounded border-2 border-black/25 bg-white bg-clip-padding font-['Liberation_Sans',sans-serif] text-[22px] leading-[30px] font-bold text-black">
          <button aria-label="Zoom in" className="h-[31px]">
            +
          </button>
          <button aria-label="Zoom out" className="h-[30px]">
            −
          </button>
        </div>
        <Popup />
      </div>
    </section>
  );
}

function Card({ children }: { children: ReactNode }) {
  return <div className="mt-5 rounded-[15px] bg-white px-[25px] pt-[26px] pb-6 shadow-[0_0_30px_rgba(0,0,0,0.05)]">{children}</div>;
}

const divider = <span className="mx-[9px] h-4 w-px shrink-0 bg-neutral-300" />;

export default function App() {
  return (
    <div className="grid h-screen grid-cols-[1366fr_1358fr] overflow-hidden font-['Open_Sans','Noto_Sans',sans-serif] text-[15px] leading-6 text-[#212529]">
      <Browser
        url="pcsnet.dyn.ts.si/fail2ban#"
        urlClass="bg-[linear-gradient(to_right,#1f1f1f_95px,#6b6b6b_95px)]"
        canGoBack
        extensions={
          <>
            <ToolButton label="Malware guard"><ExtM /></ToolButton>
            <ToolButton label="Trackers"><Ghost count={3} /></ToolButton>
            <ToolButton label="Lock"><LockIcon /></ToolButton>
            <ToolButton label="Stylus"><SIcon /></ToolButton>
            <ToolButton label="Badger"><BadgerIcon /></ToolButton>
            <ToolButton label="Recycle"><FaRecycle className="size-4 text-neutral-500" /></ToolButton>
            <ToolButton label="Extensions"><MdOutlineExtension className="size-5" /></ToolButton>
            {divider}
            <ToolButton label="Profile"><PyramidIcon /></ToolButton>
            <ToolButton label="Menu"><MdMoreVert className="size-5" /></ToolButton>
            <span className="w-1 shrink-0" />
          </>
        }
        start={
          <>
            <button aria-label="Tab groups" className="ml-3"><GridIcon /></button>
            <span className="mr-2 ml-[15px] h-4 w-px bg-neutral-300" />
          </>
        }
        bookmarks={leftBookmarks}
        barClass="relative flex w-[15px] shrink-0 flex-col items-center justify-between bg-[#fcfcfc] py-1"
        thumbClass="absolute top-[161px] h-[172px] w-[9px] rounded-full bg-[#8b8b8b]"
      >
        <div className="h-[29px]" />
        <Tabs active={0} />
        <Card>
          <Overview />
        </Card>
      </Browser>
      <Browser
        url="https://pcsnet.dyn.ts.si/fail2ban"
        urlClass="bg-[linear-gradient(to_right,#6b6b6b_46px,#1f1f1f_46px,#1f1f1f_141px,#6b6b6b_141px)]"
        extensions={
          <>
            <ToolButton label="Translate"><TranslateIcon /></ToolButton>
            <ToolButton label="Privacy"><DuckIcon /></ToolButton>
            <ToolButton label="Malware guard"><ExtM /></ToolButton>
            <ToolButton label="Badger"><BadgerIcon /></ToolButton>
            <ToolButton label="Trackers"><Ghost count={4} /></ToolButton>
            <ToolButton label="Stylus"><SIcon /></ToolButton>
            <ToolButton label="Lock"><LockIcon /></ToolButton>
            <ToolButton label="Recycle"><FaRecycle className="size-4 text-neutral-500" /></ToolButton>
            <ToolButton label="Extensions"><MdOutlineExtension className="size-5" /></ToolButton>
            {divider}
            <ToolButton label="Media"><MdQueueMusic className="size-5" /></ToolButton>
            <ToolButton label="Profile"><Avatar /></ToolButton>
            <ToolButton label="Menu"><MdMoreVert className="size-5" /></ToolButton>
            <span className="w-px shrink-0" />
          </>
        }
        start={
          <>
            <a href="#" className="ml-3 flex items-center gap-1.5"><AppsIcon />Apps</a>
            <button aria-label="Tab groups" className="ml-4"><GridIcon /></button>
            <span className="mr-2 ml-[15px] h-4 w-px bg-sky-200" />
          </>
        }
        bookmarks={rightBookmarks}
        barClass="relative flex w-3 shrink-0 flex-col items-center justify-between bg-[#fcfcfc] py-1"
        thumbClass="absolute top-[201px] h-[224px] w-[9px] rounded-full bg-[#8b8b8b]"
      >
        <div className="h-[38px]" />
        <Tabs active={1} />
        <Card>
          <AttackMap />
        </Card>
      </Browser>
    </div>
  );
}
